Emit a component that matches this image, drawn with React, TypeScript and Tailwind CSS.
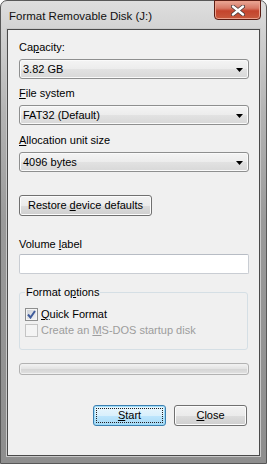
import React from 'react';

const ComboBox: React.FC<{ value: string; className?: string }> = ({ value, className }) => (
  <div
    className={`flex h-[20px] w-[230px] items-center justify-between rounded-[3px] border border-[#8e8f8f] bg-[linear-gradient(#f4f4f4_0%,#ececec_50%,#e2e2e2_51%,#d8d8d8_100%)] pl-[3px] pr-[5px] shadow-[inset_0_0_0_1px_#fafafa] ${className ?? ''}`}
  >
    <span>{value}</span>
    <svg width="7" height="4" viewBox="0 0 7 4" className="mt-[1px]">
      <path d="M0 0h7L3.5 4z" fill="#000" />
    </svg>
  </div>
);

const PushButton: React.FC<{ children: React.ReactNode; className?: string; isDefault?: boolean }> = ({
  children,
  className,
  isDefault,
}) =>
  isDefault ? (
    <div
      className={`flex h-[21px] items-center justify-center rounded-[3px] border border-[#3c7fb1] bg-[linear-gradient(#eaf6fd_0%,#d9f0fc_50%,#bee6fd_51%,#a7d9f5_100%)] p-[2px] shadow-[inset_0_0_0_1px_#9ddcf8] ${className ?? ''}`}
    >
      <div className="flex h-full w-full items-center justify-center border border-dotted border-[#202020]">
        {children}
      </div>
    </div>
  ) : (
    <div
      className={`flex h-[21px] items-center justify-center rounded-[3px] border border-[#707070] bg-[linear-gradient(#f2f2f2_0%,#ebebeb_50%,#dddddd_51%,#cfcfcf_100%)] shadow-[inset_0_0_0_1px_#fcfcfc] ${className ?? ''}`}
    >
      {children}
    </div>
  );

const CheckBox: React.FC<{ checked?: boolean; disabled?: boolean }> = ({ checked, disabled }) => (
  <div
    className={`flex h-[13px] w-[13px] items-center justify-center border ${
      disabled
        ? 'border-[#c4c4c4] bg-[#f4f4f4]'
        : 'border-[#8e8f8f] bg-[linear-gradient(135deg,#cbcfd5_0%,#f6f6f6_100%)] shadow-[inset_0_0_0_1px_#f4f4f4]'
    }`}
  >
    {checked && (
      <svg width="9" height="9" viewBox="0 0 9 9">
        <path d="M1 4.5 L3.5 7.5 L8 1" fill="none" stroke="#3f5b9b" strokeWidth="2" />
      </svg>
    )}
  </div>
);

const App: React.FC = () => {
  return (
    <div className="flex h-[464px] w-[267px] flex-col rounded-t-[7px] border border-[#585858] bg-[linear-gradient(180deg,#dedede_0px,#d2d2d2_30px,#b4b4b4_110px,#9a9a9a_220px,#8e8e8e_100%)] px-[6px] pb-[7px] font-['Liberation_Sans',Arial,sans-serif] text-[11px] leading-[13px] text-black">
      {/* title bar */}
      <div className="-mx-[6px] flex h-[28px] items-start justify-between">
        <span className="mt-[8px] pl-[8px] text-[11.5px] leading-[14px] text-[#111]">Format Removable Disk (J:)</span>
        <div className="-mt-[1px] mr-[5px] flex h-[20px] w-[47px] items-center justify-center rounded-b-[4px] border border-[#5b1d14] bg-[linear-gradient(#e9a897_0%,#d77865_40%,#c4442d_55%,#c85a3e_100%)] shadow-[inset_0_0_0_1px_#eba08c]">
          <svg width="14" height="11" viewBox="0 0 14 11">
            <path d="M2 1.5 L12 9.5 M12 1.5 L2 9.5" stroke="#4a3a3a" strokeWidth="4" strokeLinecap="round" />
            <path d="M2 1.5 L12 9.5 M12 1.5 L2 9.5" stroke="#ffffff" strokeWidth="2.4" strokeLinecap="round" />
          </svg>
        </div>
      </div>

      {/* client area */}
      <div className="flex flex-1 flex-col border border-[#4a4a4a] bg-[#f0f0f0] pl-[11px] pt-[11px] shadow-[0_0_0_1px_#c8c8c8]">
        <span>
          Ca<u className="underline-offset-[1px]">p</u>acity:
        </span>
        <ComboBox value="3.82 GB" className="mt-[5px]" />

        <span className="mt-[8px]">
          <u className="underline-offset-[1px]">F</u>ile system
        </span>
        <ComboBox value="FAT32 (Default)" className="mt-[5px]" />

        <span className="mt-[9px]">
          <u className="underline-offset-[1px]">A</u>llocation unit size
        </span>
        <ComboBox value="4096 bytes" className="mt-[5px]" />

        <PushButton className="mt-[23px] w-[133px]">
          <span>
            Restore <u className="underline-offset-[1px]">d</u>evice defaults
          </span>
        </PushButton>

        <span className="mt-[22px]">
          Volume <u className="underline-offset-[1px]">l</u>abel
        </span>
        <div className="mt-[3px] h-[20px] w-[230px] rounded-[2px] border border-[#c9cdd3] border-t-[#b7bcc4] bg-white" />

        <fieldset className="mt-[12px] h-[64px] w-[229px] rounded-[3px] border border-[#d5dfe5] pl-[5px]">
          <legend className="px-[1px]">
            Format o<u className="underline-offset-[1px]">p</u>tions
          </legend>
          <div className="mt-[9px] flex items-center gap-[3px]">
            <CheckBox checked />
            <span>
              <u className="underline-offset-[1px]">Q</u>uick Format
            </span>
          </div>
          <div className="mt-[3px] flex items-center gap-[3px] text-[#9d9d9d]">
            <CheckBox disabled />
            <span>
              Create an <u className="underline-offset-[1px]">M</u>S-DOS startup disk
            </span>
          </div>
        </fieldset>

        <div className="mt-[13px] h-[12px] w-[230px] rounded-[3px] border border-[#b2b2b2] bg-[linear-gradient(#f3f3f3_0%,#e4e4e4_45%,#d6d6d6_55%,#e2e2e2_100%)] shadow-[inset_0_0_0_1px_#f0f0f0]" />

        <div className="mt-[30px] flex w-[228px] justify-end gap-[8px]">
          <PushButton isDefault className="w-[73px]">
            <span>
              <u className="underline-offset-[1px]">S</u>tart
            </span>
          </PushButton>
          <PushButton className="w-[73px]">
            <span>
              <u className="underline-offset-[1px]">C</u>lose
            </span>
          </PushButton>
        </div>
      </div>
    </div>
  );
};

export default App;
